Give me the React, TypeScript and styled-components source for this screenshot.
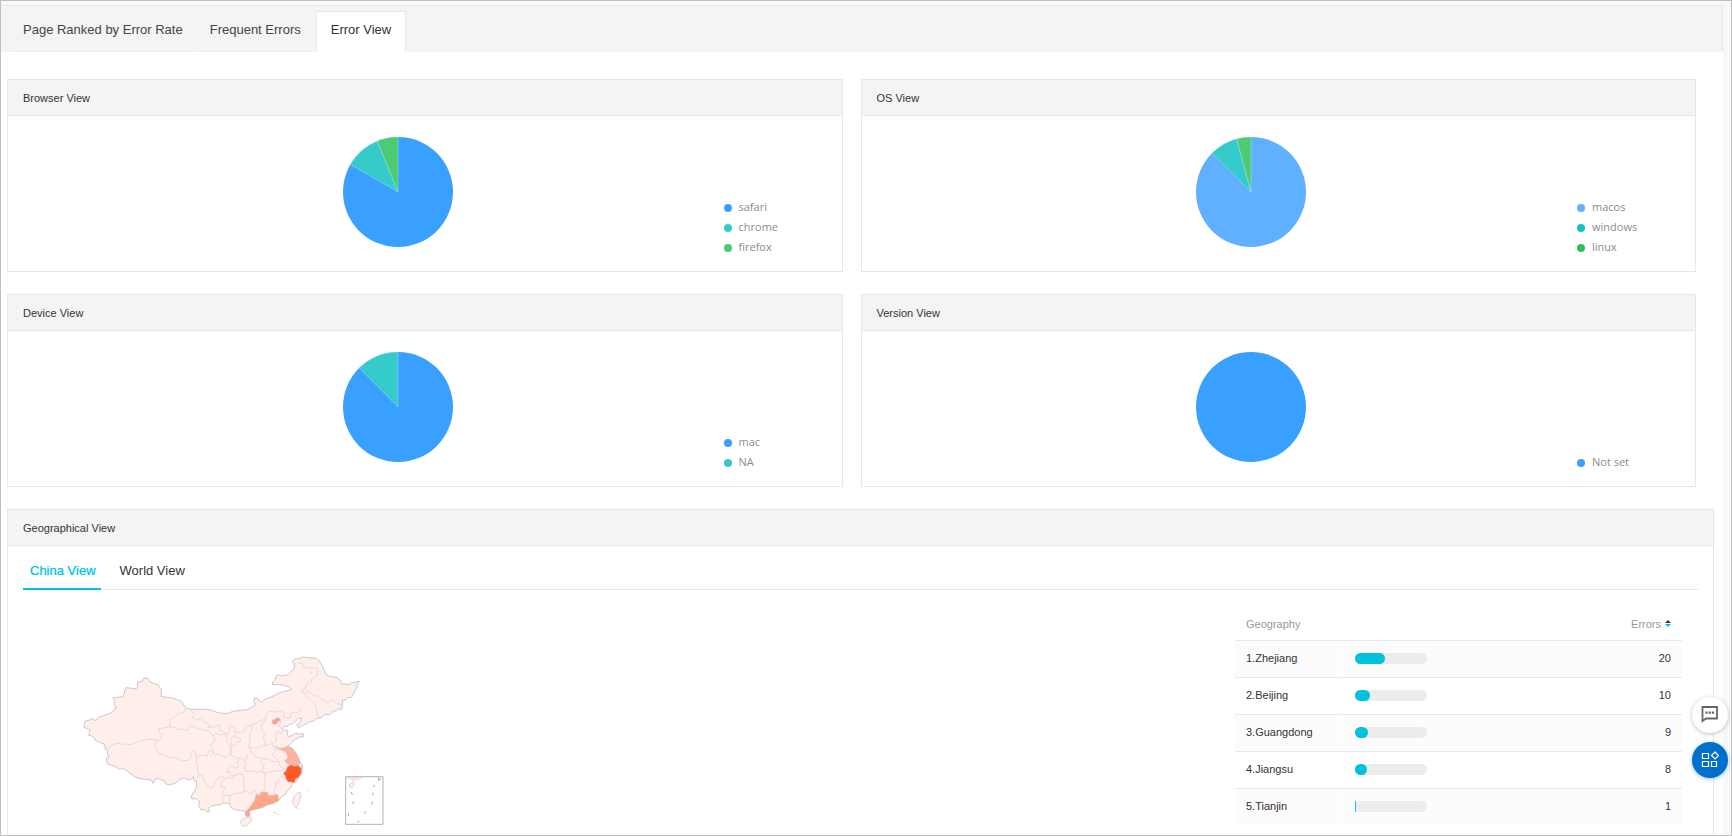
import React, { useState } from 'react';
import styled, { createGlobalStyle } from 'styled-components';

const GlobalStyle = createGlobalStyle`
  * { box-sizing: border-box; }
  body {
    margin: 0;
    background: #f7f8fa;
    color: #333;
    font-family: "Liberation Sans", Arial, sans-serif;
    font-size: 11px;
    line-height: 16px;
  }
  button { font: inherit; color: inherit; background: none; border: 0; padding: 0; cursor: pointer; }
  h2 { margin: 0; font-size: inherit; font-weight: 400; }
`;

const Frame = styled.div`
  display: flex;
  flex-direction: column;
  min-height: 100vh;
  border: 1px solid #bfbfbf;
  padding: 4px 8px 0 0;
`;

const TabBar = styled.div`
  display: flex;
  gap: 3px;
  align-items: flex-end;
  height: 47px;
  padding: 0 10px;
  background: #f4f4f4;
  border-top: 1px solid #e6e8eb;
  border-right: 1px solid #e3e8ee;
`;

const PageTab = styled.button<{ $active: boolean }>`
  height: 41px;
  padding: ${(p) => (p.$active ? '0 14px 3px' : '0 11px 3px')};
  font-size: 13px;
  color: ${(p) => (p.$active ? '#333' : '#444')};
  background: ${(p) => (p.$active ? '#fff' : 'transparent')};
  border: 1px solid ${(p) => (p.$active ? '#e6e8eb' : 'transparent')};
  border-bottom-color: ${(p) => (p.$active ? '#fff' : '#e9ebec')};
`;

const Content = styled.main`
  display: flex;
  flex-direction: column;
  flex: 1;
  gap: 22px;
  padding: 27px 9px 0 6px;
  background: #fff;
`;

const CardGrid = styled.div`
  display: grid;
  grid-template-columns: 1fr 1fr;
  gap: 22px 18px;
  margin-right: 18px;
`;

const Card = styled.section`
  border: 1px solid #e3e8eb;
`;

const GeoCard = styled(Card)`
  flex: 1;
  border-bottom: 0;
`;

const CardHeader = styled.header`
  height: 36px;
  padding: 10px 15px;
  background: #f4f4f4;
  border-bottom: 1px solid #e3e8eb;
`;

const CardBody = styled.div`
  display: flex;
  height: 155px;
`;

const PieArea = styled.div`
  display: flex;
  flex: 1;
  justify-content: center;
  padding: 21px 0 0 64px;
`;

const Legend = styled.ul`
  display: flex;
  flex-direction: column;
  justify-content: flex-end;
  width: 118px;
  margin: 0;
  padding: 0 0 13px;
  list-style: none;
`;

const LegendItem = styled.li<{ $color: string }>`
  display: flex;
  align-items: center;
  gap: 7px;
  height: 20px;
  color: #8c8c8c;
  font-family: "Open Sans", "Noto Sans", sans-serif;

  &::before {
    content: "";
    width: 8px;
    height: 8px;
    border-radius: 50%;
    background: ${(p) => p.$color};
  }
`;

const LegendLabel = styled.span`
  padding-bottom: 2px;
`;

const GeoBody = styled.div`
  padding: 9px 15px 0;
`;

const SubTabs = styled.div`
  display: flex;
  gap: 12px;
  border-bottom: 1px solid #e6e8eb;
`;

const SubTab = styled.button<{ $active: boolean }>`
  height: 35px;
  padding: 0 5px 2px 7px;
  margin-bottom: -1px;
  font-size: 13px;
  color: ${(p) => (p.$active ? '#00c1de' : '#333')};
  border-bottom: 2px solid ${(p) => (p.$active ? '#00c1de' : 'transparent')};
  text-shadow: ${(p) => (p.$active ? '0 0 1px rgba(0, 193, 222, 0.5)' : 'none')};
`;

const GeoContent = styled.div`
  display: flex;
  justify-content: space-between;
  align-items: flex-start;
  padding: 19px 16px 0 37px;
`;

const MapBox = styled.div`
  padding-top: 31px;

  svg { display: block; }
`;

const GeoTable = styled.table`
  width: 27%;
  min-width: 447px;
  border-collapse: separate;
  border-spacing: 0;
  table-layout: fixed;
`;

const Th = styled.th<{ $width?: string; $end?: boolean }>`
  width: ${(p) => p.$width ?? 'auto'};
  height: 31px;
  padding: 0 11px 2px;
  font-weight: 400;
  color: #999;
  text-align: ${(p) => (p.$end ? 'right' : 'left')};
`;

const Row = styled.tr`
  &:nth-child(odd) { background: #fcfcfc; }
`;

const Td = styled.td<{ $end?: boolean; $divided?: boolean }>`
  height: 37px;
  padding: 0 11px 2px;
  border-top: 1px solid #e3eaf0;
  border-right: ${(p) => (p.$divided ? '1px solid #fff' : '0')};
  text-align: ${(p) => (p.$end ? 'right' : 'left')};
`;

const SortButton = styled.button`
  display: inline-flex;
  align-items: center;
  gap: 4px;
`;

const BarTrack = styled.div`
  width: 72px;
  height: 11px;
  border-radius: 6px;
  background: #ebecec;
`;

const BarFill = styled.div`
  height: 11px;
  border-radius: 6px;
  background: #00c1de;
`;

const FloatingTools = styled.div`
  position: fixed;
  right: 4px;
  bottom: 58px;
  display: flex;
  flex-direction: column;
  gap: 9px;
`;

const RoundButton = styled.button<{ $primary?: boolean }>`
  display: flex;
  align-items: center;
  justify-content: center;
  width: 36px;
  height: 36px;
  padding-bottom: ${(p) => (p.$primary ? '0' : '2px')};
  border-radius: 50%;
  color: ${(p) => (p.$primary ? '#fff' : '#666')};
  background: ${(p) => (p.$primary ? '#0070cc' : '#fff')};
  box-shadow: 0 1px 4px ${(p) => (p.$primary ? 'rgba(0, 112, 204, 0.4)' : 'rgba(0, 0, 0, 0.25)')};
`;

type Slice = { label: string; end: number; color: string; dot?: string };

const charts: { title: string; slices: Slice[] }[] = [
  {
    title: 'Browser View',
    slices: [
      { label: 'safari', end: 300, color: '#3aa0ff' },
      { label: 'chrome', end: 338, color: '#36cbcb' },
      { label: 'firefox', end: 360, color: '#4dcb73' },
    ],
  },
  {
    title: 'OS View',
    slices: [
      { label: 'macos', end: 315, color: '#5fb0ff' },
      { label: 'windows', end: 345, color: '#36cbcb', dot: '#13c2c2' },
      { label: 'linux', end: 360, color: '#4dcb73', dot: '#2fc25b' },
    ],
  },
  {
    title: 'Device View',
    slices: [
      { label: 'mac', end: 315, color: '#3aa0ff' },
      { label: 'NA', end: 360, color: '#36cbcb' },
    ],
  },
  { title: 'Version View', slices: [{ label: 'Not set', end: 360, color: '#3aa0ff' }] },
];

const regions = [
  { name: 'Zhejiang', errors: 20, bar: 30 },
  { name: 'Beijing', errors: 10, bar: 15 },
  { name: 'Guangdong', errors: 9, bar: 13 },
  { name: 'Jiangsu', errors: 8, bar: 12 },
  { name: 'Tianjin', errors: 1, bar: 1 },
];

const R = 55;
const point = (deg: number) => {
  const a = (deg * Math.PI) / 180;
  return `${(R + R * Math.sin(a)).toFixed(2)} ${(R - R * Math.cos(a)).toFixed(2)}`;
};

function Pie({ slices, title }: { slices: Slice[]; title: string }) {
  return (
    <svg width="110" height="110" viewBox="0 0 110 110" role="img" aria-label={title}>
      <circle cx={R} cy={R} r={R} fill={slices[0].color} />
      {slices.slice(1).map((s, i) => (
        <path
          key={s.label}
          fill={s.color}
          stroke="#fff"
          strokeOpacity="0.25"
          d={`M${R} ${R}L${point(slices[i].end)}A${R} ${R} 0 0 1 ${point(s.end)}Z`}
        />
      ))}
    </svg>
  );
}

const outline =
  'M72 255 76 243 86 241 98 236 102 242 112 238 115 232 128 228 145 222 160 215 162 208 168 205 163 192 164 182 158 176 160 173 188 170 192 162 197 143 210 144 228 147 232 142 233 126 247 124 250 115 262 114 268 124 282 131 295 134 298 142 306 149 303 158 304 170 325 172 340 174 352 180 365 184 372 196 380 205 395 208 440 208 455 211 470 217 495 221 508 218 520 214 540 211 562 209 572 203 583 198 586 192 581 184 584 174 593 174 598 184 604 186 612 180 620 176 640 168 655 160 672 154 694 150 688 141 668 135 652 133 636 134 638 126 644 122 648 109 652 104 665 107 682 105 690 97 700 90 704 78 703 70 697 66 702 58 720 55 728 51 745 53 765 54 776 60 784 72 790 84 798 104 812 110 828 111 836 117 842 122 843 131 868 134 872 129 884 127 898 124 892 134 890 146 884 152 880 164 874 173 864 172 858 180 848 180 848 192 845 210 836 205 828 214 822 212 814 220 806 225 796 222 786 232 770 236 760 244 745 246 738 252 728 256 715 263 711 254 722 246 725 236 716 234 706 244 696 252 690 252 684 258 670 260 667 266 678 272 684 272 682 284 686 290 697 286 706 280 716 282 730 281 731 290 716 292 706 298 694 308 684 318 690 322 700 328 708 340 714 352 720 364 718 372 710 376 722 378 728 384 726 398 716 412 710 424 696 430 694 442 682 452 676 464 664 470 656 482 640 490 618 496 608 502 590 507 574 510 568 516 570 526 562 530 556 524 557 514 545 512 525 509 512 501 508 491 490 488 486 493 470 495 453 498 445 506 450 516 440 515 434 508 424 510 416 497 418 484 408 476 396 477 394 468 406 450 410 440 409 424 402 422 400 410 390 421 374 414 360 418 345 430 328 435 318 432 314 424 298 416 286 416 279 430 274 420 256 418 240 416 226 411 216 404 200 392 188 385 178 388 162 378 143 372 138 356 148 351 142 342 143 332 136 328 134 314 122 308 104 300 101 292 92 286 86 287 90 270 82 265 74 264Z';

const borders = [
  'M142 327 148 322 155 314 172 310 188 312 210 314 222 311 235 304 250 302 265 297 280 298 290 302 300 300 306 286 298 278 296 266 312 264 328 260 330 248 330 238 345 230 352 222 366 219 374 214 378 205',
  'M289 302 286 318 292 332 296 342 312 344 322 350 350 354 362 360 370 362 388 360 394 352 393 338 398 331 406 337 411 350',
  'M328 260 348 264 354 270 366 266 372 271 386 268 388 259 400 258 412 266 430 268 450 276 460 288 466 300 456 310 450 316 458 324 456 332 446 334 442 348 428 346 411 352',
  'M411 350 408 362 412 376 413 396 416 408 410 414',
  'M416 408 426 404 432 420 444 438 450 445 462 440 464 428 472 418 482 408 494 416',
  'M392 209 402 222 398 234 412 238 426 234 430 246 444 252 452 257 442 262 462 262 470 256 480 258 478 270 490 274',
  'M456 288 468 278 480 286 494 282 502 294 498 304 506 310 512 326 508 342 498 350 480 348 476 340 464 346 460 334 452 344',
  'M490 274 502 284 510 274 506 262 514 257 526 266 522 274 534 276 526 284 514 292 515 308 514 346',
  'M534 276 548 278 560 262 575 254 588 250 606 240 618 238 618 224 630 214 648 216 662 212 674 218 670 230 684 236 692 232 690 224 702 216 712 218 726 206',
  'M522 290 542 294 540 304 530 308 526 318 516 316',
  'M575 254 576 268 569 278 570 300 566 320 580 324 600 320 614 314',
  'M616 240 604 258 606 272 614 280 610 296 616 306 612 318 628 314 640 310 650 300 646 288 652 274 664 280 668 270',
  'M568 320 572 334 586 350 606 356 626 358 644 366 656 362',
  'M640 312 638 320 648 322 645 336 638 342 644 352 656 362 658 376 668 384 674 390',
  'M514 346 528 354 544 356 556 362 558 348 564 346 552 368 560 378 550 384 560 390 554 396',
  'M540 356 532 370 536 382 522 384 516 378 504 386 498 398 512 394 508 404 520 408 530 402 544 402 552 406',
  'M490 420 504 412 520 414 524 406 540 402 552 412 550 430 554 446 548 456 532 460 518 462 512 468 494 466 486 458 496 444 480 436 490 420',
  'M494 466 488 478 498 492 M512 466 508 480 512 500',
  'M554 396 572 392 592 398 606 392 612 400 616 416 612 430 614 446 606 458 592 462 582 450 576 462 558 452 550 456',
  'M606 392 612 378 602 368 606 356',
  'M612 400 630 396 648 392 670 392',
  'M670 402 660 414 648 430 644 446 640 464 M606 458 616 460',
  'M715 70 726 70 735 82 752 84 770 82 775 92 770 108 756 116 754 126 740 132 736 146 726 150 728 158 740 158 736 168 750 178 764 192 768 206 774 232',
  'M740 150 750 158 762 168 776 168 786 178 798 188 810 184 820 180 830 192 840 192 847 200',
  'M660 236 662 248 656 256 664 266 M750 98 756 96 753 100',
];

const provinces = [
  { color: '#ffb29c', d: 'M648 319 658 326 670 323 684 319 698 326 708 340 716 356 720 366 716 376 704 374 694 376 680 370 674 362 684 354 680 340 672 332 656 328Z' },
  { color: '#ff5a26', d: 'M670 400 678 392 682 380 692 374 704 378 712 376 724 384 724 400 714 414 706 418 704 428 692 426 684 426 678 416 676 408Z' },
  { color: '#ffa58c', d: 'M557 515 570 502 578 490 584 482 588 464 600 466 604 456 622 457 626 466 640 467 646 462 654 466 656 482 640 490 618 496 608 502 590 507 574 510 568 516 570 526 562 530 556 524Z' },
  { color: '#ff9f84', d: 'M636 248 638 241 646 238 650 233 659 235 659 243 652 246 650 252 640 252Z' },
  { color: '#fff0eb', d: 'M541 548 546 538 556 532 572 530 576 537 570 548 560 558 548 558Z' },
  { color: '#fff0eb', d: 'M698 484 702 470 710 460 722 457 722 468 718 484 710 504 702 498Z' },
];

const insetMarks =
  'M954 412 957 422 962 414M944 434 941 441M940 458 938 466M938 484 935 494M917 514 914 521M892 546 898 544M866 520 865 528M880 484 879 492M874 456 877 464M642 516 646 520M651 521 654 524M743 450 744 452M716 504 717 506';

function ChinaMap() {
  return (
    <svg width="330" height="190" viewBox="0 0 990 570" role="img" aria-label="Errors by province" strokeLinejoin="round">
      <path d={outline} fill="#ffeee9" stroke="#cbc8d2" strokeWidth="3" />
      <path d={borders.join('')} fill="none" stroke="#e4dadf" strokeWidth="3" />
      {provinces.map((p) => (
        <path key={p.d} d={p.d} fill={p.color} stroke="#d0bfc8" strokeWidth="2" />
      ))}
      <path d="M720 366 728 378 724 390" fill="none" stroke="#bfc0cc" strokeWidth="3" />
      <rect x="857" y="410" width="112" height="143" fill="none" stroke="#b4b4b6" strokeWidth="3" />
      <path d="M858 412H908L900 417 886 419 880 425 876 418 860 416Z" fill="#ffe4de" stroke="#d8c8cc" strokeWidth="1" />
      <path d="M868 432 876 428 885 429 882 438 876 443 869 440Z" fill="#ffeee9" stroke="#cbc8d2" strokeWidth="2" />
      <path d={insetMarks} fill="none" stroke="#a9a9b0" strokeWidth="3" />
    </svg>
  );
}

function ChartCard({ title, slices }: { title: string; slices: Slice[] }) {
  return (
    <Card>
      <CardHeader><h2>{title}</h2></CardHeader>
      <CardBody>
        <PieArea><Pie slices={slices} title={title} /></PieArea>
        <Legend>
          {slices.map((s) => (
            <LegendItem key={s.label} $color={s.dot ?? s.color}>
              <LegendLabel>{s.label}</LegendLabel>
            </LegendItem>
          ))}
        </Legend>
      </CardBody>
    </Card>
  );
}

const pageTabs = ['Page Ranked by Error Rate', 'Frequent Errors', 'Error View'];
const mapTabs = ['China View', 'World View'];

export default function App() {
  const [page, setPage] = useState('Error View');
  const [map, setMap] = useState('China View');

  return (
    <>
      <GlobalStyle />
      <Frame>
        <TabBar role="tablist">
          {pageTabs.map((t) => (
            <PageTab key={t} role="tab" aria-selected={t === page} $active={t === page} onClick={() => setPage(t)}>
              {t}
            </PageTab>
          ))}
        </TabBar>
        <Content>
          <CardGrid>
            {charts.map((c) => <ChartCard key={c.title} {...c} />)}
          </CardGrid>
          <GeoCard>
            <CardHeader><h2>Geographical View</h2></CardHeader>
            <GeoBody>
              <SubTabs role="tablist">
                {mapTabs.map((t) => (
                  <SubTab key={t} role="tab" aria-selected={t === map} $active={t === map} onClick={() => setMap(t)}>
                    {t}
                  </SubTab>
                ))}
              </SubTabs>
              <GeoContent>
                <MapBox><ChinaMap /></MapBox>
                <GeoTable>
                  <thead>
                    <tr>
                      <Th $width="109px">Geography</Th>
                      <Th aria-label="Share" />
                      <Th $end>
                        <SortButton>
                          Errors
                          <svg width="6" height="7" viewBox="0 0 6 7" aria-hidden="true">
                            <path d="M3 0L6 3H0Z" fill="#333" />
                            <path d="M0 4H6L3 7Z" fill="#00c1de" />
                          </svg>
                        </SortButton>
                      </Th>
                    </tr>
                  </thead>
                  <tbody>
                    {regions.map((r, i) => (
                      <Row key={r.name}>
                        <Td $divided>{`${i + 1}.${r.name}`}</Td>
                        <Td>
                          <BarTrack><BarFill style={{ width: r.bar }} /></BarTrack>
                        </Td>
                        <Td $end>{r.errors}</Td>
                      </Row>
                    ))}
                  </tbody>
                </GeoTable>
              </GeoContent>
            </GeoBody>
          </GeoCard>
        </Content>
      </Frame>
      <FloatingTools>
        <RoundButton aria-label="Feedback">
          <svg width="18" height="18" viewBox="0 0 18 18" fill="none" stroke="currentColor" strokeWidth="1.8">
            <path d="M1.500 2H16V13.500H5L1.500 16Z" />
            <path d="M4.500 7.700H6.700M7.700 7.700H9.900M10.900 7.700H13.100" strokeWidth="2.2" />
          </svg>
        </RoundButton>
        <RoundButton $primary aria-label="Tools">
          <svg width="18" height="18" viewBox="0 0 18 18" fill="none" stroke="currentColor" strokeWidth="1.2">
            <path d="M1.500 2.500H7.500V7.500H1.500ZM1.500 10.500H7.500V15.500H1.500ZM10.500 10.500H15.500V15.500H10.500ZM14 1L17.500 4.500 14 8 10.500 4.500Z" />
          </svg>
        </RoundButton>
      </FloatingTools>
    </>
  );
}
